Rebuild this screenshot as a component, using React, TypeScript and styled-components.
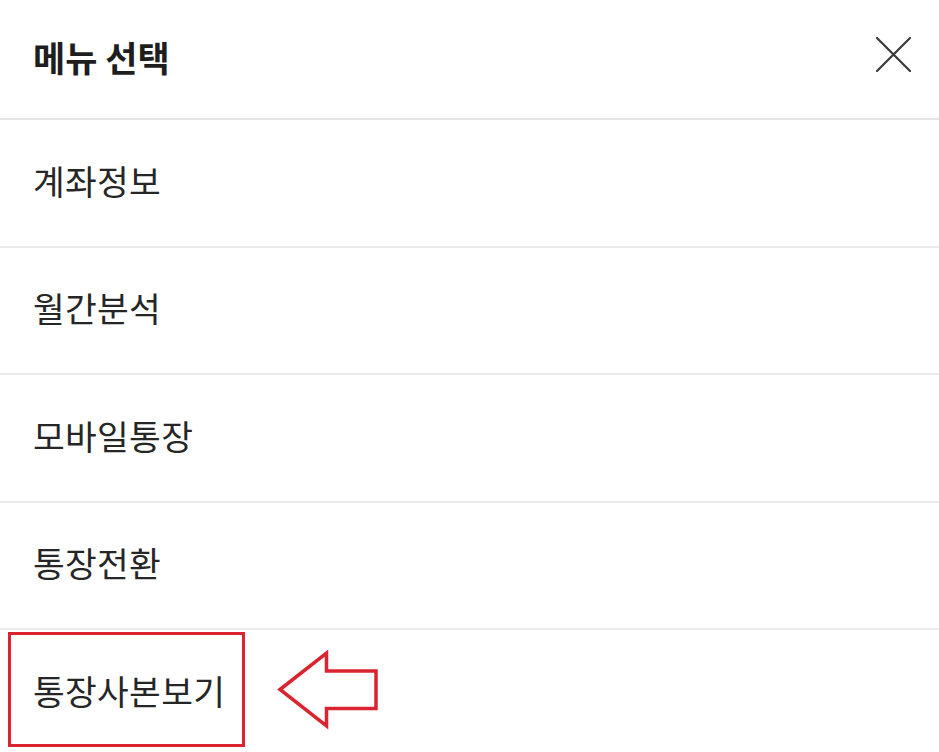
import React from "react";
import styled, { createGlobalStyle } from "styled-components";

const GlobalStyle = createGlobalStyle`
  html, body { margin: 0; padding: 0; background: #ffffff; overflow: hidden; }
  body { font-family: "Noto Sans CJK KR", "Noto Sans", sans-serif; }
`;

const Sheet = styled.div`
  width: 939px;
  height: 752px;
  display: flex;
  flex-direction: column;
  background: #ffffff;
  overflow: hidden;
`;

const Header = styled.header`
  box-sizing: border-box;
  height: 120px;
  flex: none;
  display: flex;
  align-items: center;
  justify-content: space-between;
  padding: 0 28px 4px 33px;
  border-bottom: 2px solid #e6e6e6;
`;

const Title = styled.h1`
  margin: 0 0 2px;
  font-size: 35px;
  line-height: 1;
  font-weight: 700;
  color: #1e1e1e;
  letter-spacing: 0;
`;

const CloseButton = styled.button`
  width: 35px;
  height: 35px;
  margin-bottom: 6px;
  padding: 0;
  border: 0;
  background: transparent;
  display: flex;
  align-items: center;
  justify-content: center;
  color: #3a3a3a;
`;

const MenuList = styled.ul`
  list-style: none;
  margin: 0;
  padding: 0;
  display: flex;
  flex-direction: column;
`;

const MenuItem = styled.li<{ $last?: boolean }>`
  position: relative;
  height: 125.5px;
  flex: none;
  display: flex;
  align-items: center;
  padding-left: 33px;
  border-bottom: ${(p) => (p.$last ? "none" : "2px solid #ebebeb")};
  font-size: 34.5px;
  font-weight: 400;
  color: #262626;
`;

const Label = styled.span`
  position: relative;
  top: -3px;
  line-height: 1;
  letter-spacing: 0.3px;
`;

const HighlightBox = styled.div`
  position: absolute;
  left: 8px;
  top: 2px;
  width: 237px;
  height: 115px;
  box-sizing: border-box;
  border: 3.5px solid #da2531;
  pointer-events: none;
`;

const Arrow = styled.svg`
  position: absolute;
  left: 276px;
  top: 21px;
  overflow: visible;
`;

const items = ["계좌정보", "월간분석", "모바일통장", "통장전환", "통장사본보기"];

export default function App() {
  return (
    <>
      <GlobalStyle />
      <Sheet>
        <Header>
          <Title>메뉴 선택</Title>
          <CloseButton aria-label="닫기">
            <svg width="35" height="35" viewBox="0 0 35 35">
              <path d="M1 1 L34 34 M34 1 L1 34" stroke="currentColor" strokeWidth="2.2" strokeLinecap="round" fill="none" />
            </svg>
          </CloseButton>
        </Header>
        <MenuList>
          {items.map((t, i) => {
            const last = i === items.length - 1;
            return (
              <MenuItem key={t} $last={last}>
                <Label>{t}</Label>
                {last && (
                  <>
                    <HighlightBox />
                    <Arrow width="104" height="78" viewBox="0 0 104 78">
                      <path
                        d="M4 38.5 L50.5 2 L50.5 20 L100 20 L100 57.5 L50.5 57.5 L50.5 75 Z"
                        fill="none"
                        stroke="#da2531"
                        strokeWidth="3.5"
                        strokeLinejoin="miter"
                      />
                    </Arrow>
                  </>
                )}
              </MenuItem>
            );
          })}
        </MenuList>
      </Sheet>
    </>
  );
}
